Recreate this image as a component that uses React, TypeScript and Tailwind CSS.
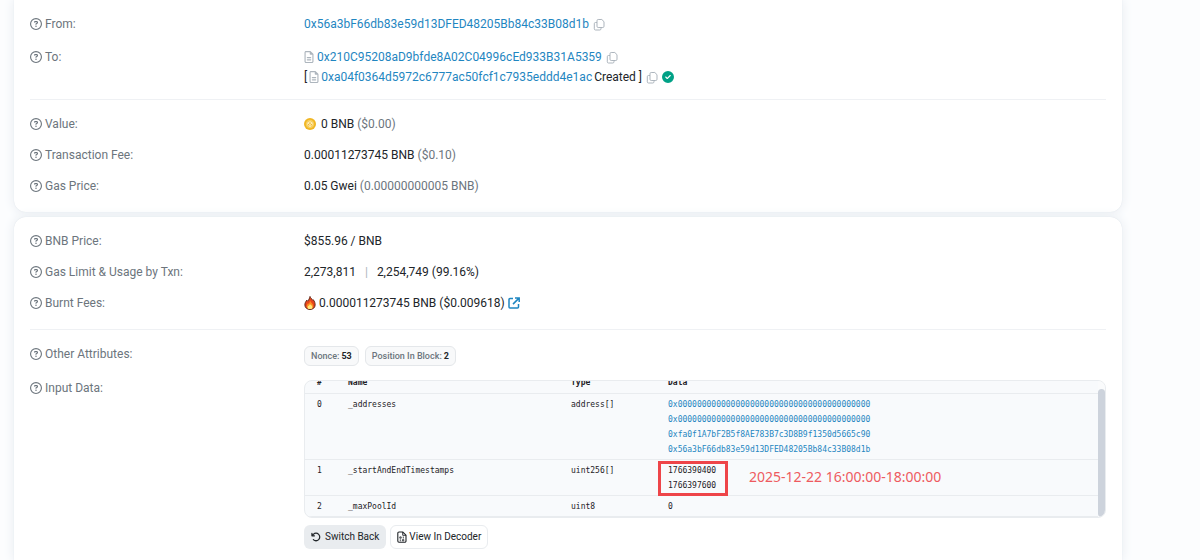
import type { ReactNode } from "react";
import {
  FaRegCircleQuestion,
  FaRegFileLines,
  FaCircleCheck,
  FaArrowRotateLeft,
} from "react-icons/fa6";

function Row({ label, children }: { label: string; children: ReactNode }) {
  return (
    <div className="grid grid-cols-[274px_minmax(0,1fr)]">
      <dt className="flex h-5 items-center gap-[3px] text-[#6c757d]">
        <FaRegCircleQuestion className="size-3" />
        {label}
      </dt>
      <dd>{children}</dd>
    </div>
  );
}

function Divider() {
  return <hr className="border-t border-[#eff1f4]" />;
}

function CopyButton({ label }: { label: string }) {
  return (
    <button type="button" aria-label={label} className="ml-1 text-[#adb5bd]">
      <svg viewBox="0 0 12 13" className="h-[13px] w-3" fill="none" stroke="currentColor" strokeWidth="1">
        <path d="M5.200 1.500h3.600L11 3.700v4.600a1.200 1.200 0 0 1-1.200 1.200H5.200A1.200 1.200 0 0 1 4 8.300V2.700a1.200 1.200 0 0 1 1.200-1.200Z" />
        <path d="M4 4.500H2.500A1.200 1.200 0 0 0 1.300 5.700v5.100A1.200 1.200 0 0 0 2.500 12h4.300A1.200 1.200 0 0 0 8 10.800V9.500" />
      </svg>
    </button>
  );
}

function BnbCoin() {
  return (
    <svg viewBox="0 0 24 24" className="size-3" aria-hidden="true">
      <circle cx="12" cy="12" r="12" fill="#f0b622" />
      <circle cx="12" cy="12" r="8.500" fill="#f6cd5c" />
      <path d="M12 6.500l5 2.800v4.500l-5 4.200-5-4.200V9.300z" fill="#fff3cf" />
      <path d="M12 8.500l2.800 1.700L12 12l-2.800-1.800zM11 13.200v3l-3-2.400v-2.300zM13 13.200v3l3-2.400v-2.300z" fill="#f0b622" />
    </svg>
  );
}

function Flame() {
  return (
    <svg viewBox="0 0 24 30" className="h-3.5 w-3" aria-hidden="true">
      <path
        d="M12 1c1 4 4 5 6 8l1-1c3 4 4 7 4 11 0 6-5 10-11 10S1 25 1 19c0-4 2-7 4-10l2 2c3-3 4-6 5-10Z"
        fill="#e8451c"
        stroke="#5b2413"
        strokeWidth="2"
      />
      <path d="M12 9c1 5 7 7 7 13 0 4-3 6-7 6s-7-2-7-6c0-3 2-5 3-7l1 2c2-2 3-5 3-8Z" fill="#ff8f1f" />
      <path d="M12 17c1 2 5 3 5 7 0 3-2 4-5 4s-5-1-5-4c0-3 4-4 5-7Z" fill="#ffe97a" />
    </svg>
  );
}

function ExternalIcon() {
  return (
    <svg viewBox="0 0 12 12" className="size-3" fill="none" stroke="currentColor" strokeWidth="1.500" aria-hidden="true">
      <path d="M5 1.500H2A1 1 0 0 0 1 2.500V10a1 1 0 0 0 1 1h7.500a1 1 0 0 0 1-1V7" />
      <path d="M7 .9h4.200V5M11 1.100 5 7.100" />
    </svg>
  );
}

function BinaryFileIcon() {
  return (
    <svg viewBox="0 0 10 12" className="h-3 w-2.5" fill="none" stroke="currentColor" aria-hidden="true">
      <path d="M2 1h3.800L9 4.200V10a1.300 1.300 0 0 1-1.300 1.300H2A1.300 1.300 0 0 1 .8 10V2.200A1.200 1.200 0 0 1 2 1Z" strokeWidth="1.100" />
      <path d="M5.700 1v3.300H9" strokeWidth=".9" />
      <path d="M2.800 5.900h1.400v1.300H2.800zM6.300 5.500v2M3.300 8.300v2M5.400 8.600h1.400v1.300H5.400z" strokeWidth=".8" />
    </svg>
  );
}

function Badge({ name, value }: { name: string; value: string }) {
  return (
    <span className="flex h-5 items-center gap-0.5 rounded-md border border-[#e4e7ea] bg-[#f8f9fa] px-1.5 text-[9px] font-medium text-[#6c757d]">
      {name}: <b className="font-bold text-[#212529]">{value}</b>
    </span>
  );
}

const link = "text-[#1f86c1]";

const params = [
  {
    name: "_addresses",
    type: "address[]",
    data: [
      "0x0000000000000000000000000000000000000000",
      "0x0000000000000000000000000000000000000000",
      "0xfa0f1A7bF2B5f8AE783B7c3D8B9f1350d5665c90",
      "0x56a3bF66db83e59d13DFED48205Bb84c33B08d1b",
    ],
  },
  { name: "_startAndEndTimestamps", type: "uint256[]", data: ["1766390400", "1766397600"], note: "2025-12-22 16:00:00-18:00:00" },
  { name: "_maxPoolId", type: "uint8", data: ["0"] },
];

function InputTable() {
  return (
    <div className="mt-0.5 flex h-[138px] overflow-hidden rounded-lg border border-[#e9ecef] bg-[#f8fafc]">
      <table className="-mt-[9px] h-0 min-w-0 flex-1 table-fixed border-separate border-spacing-0 text-left font-['DejaVu_Sans_Mono',monospace] text-[8px] leading-[15px] text-[#1d2126]">
        <thead>
          <tr className="[&>th]:border-b [&>th]:border-[#e9ecef] [&>th]:pt-[3px] [&>th]:pb-[3px] [&>th]:pl-2 [&>th]:font-bold">
            <th scope="col" className="w-[35px]"><span className="pl-1">#</span></th>
            <th scope="col" className="w-[223px]">Name</th>
            <th scope="col" className="w-[97px]">Type</th>
            <th scope="col">Data</th>
          </tr>
        </thead>
        <tbody>
          {params.map((p, i) => (
            <tr key={p.name} className="align-top [&>td]:border-b [&>td]:border-[#e9ecef] [&>td]:pt-[3px] [&>td]:pb-[2px] [&>td]:pl-2">
              <td><span className="pl-1">{i}</span></td>
              <td>{p.name}</td>
              <td>{p.type}</td>
              <td className="relative">
                {p.data.map((d, k) =>
                  d.startsWith("0x") ? (
                    <a key={k} href="#address" className={`block ${link}`}>{d}</a>
                  ) : (
                    <div key={k}>{d}</div>
                  ),
                )}
                {p.note && (
                  <>
                    <span className="absolute top-px -left-0.5 h-[35px] w-[70px] border-3 border-[#ee4549]" />
                    <span className="absolute top-[5px] left-[89px] font-['Noto_Sans',sans-serif] text-[14px] leading-6 whitespace-nowrap text-[#ee5a60]">
                      {p.note}
                    </span>
                  </>
                )}
              </td>
            </tr>
          ))}
        </tbody>
      </table>
      <div className="w-[7px] shrink-0 bg-[#fafbfc] pt-2">
        <div className="h-full rounded-full bg-[#cdd3dc]" />
      </div>
    </div>
  );
}

export default function App() {
  return (
    <main className="flex h-screen flex-col gap-[5px] overflow-hidden bg-[#fcfdfe] pr-[78px] pl-[14px] font-['Roboto',sans-serif] text-[12px] leading-5 text-[#212529]">
      <section className="shrink-0 rounded-b-xl bg-white px-4 pt-3.5 pb-4 shadow-[0_0_12px_#e6ebf0,0_0_1px_#ccd3db]">
        <dl className="flex flex-col gap-[13px]">
          <Row label="From:">
            <div className="flex h-5 items-center">
              <a href="#from" className={link}>0x56a3bF66db83e59d13DFED48205Bb84c33B08d1b</a>
              <CopyButton label="Copy sender" />
            </div>
          </Row>
          <Row label="To:">
            <div className="flex h-5 items-center">
              <FaRegFileLines className="mr-[3px] h-3 w-[10px] text-[#adb5bd]" />
              <a href="#to" className={link}>0x210C95208aD9bfde8A02C04996cEd933B31A5359</a>
              <CopyButton label="Copy recipient" />
            </div>
            <div className="flex h-5 items-center">
              [
              <FaRegFileLines className="mx-0.5 h-3 w-[10px] text-[#adb5bd]" />
              <a href="#created" className={`mr-0.5 ${link}`}>0xa04f0364d5972c6777ac50fcf1c7935eddd4e1ac</a>
              Created ]
              <CopyButton label="Copy contract" />
              <FaCircleCheck className="ml-1 size-3 text-[#00a186]" />
            </div>
          </Row>
        </dl>
        <div className="pt-3 pb-3.5"><Divider /></div>
        <dl className="flex flex-col gap-[11px]">
          <Row label="Value:">
            <div className="flex h-5 items-center">
              <BnbCoin />
              <span className="ml-[5px]">0 BNB <span className="text-[#6c757d]">($0.00)</span></span>
            </div>
          </Row>
          <Row label="Transaction Fee:">
            0.00011273745 BNB <span className="text-[#6c757d]">($0.10)</span>
          </Row>
          <Row label="Gas Price:">
            0.05 Gwei <span className="text-[#6c757d]">(0.00000000005 BNB)</span>
          </Row>
        </dl>
      </section>

      <section className="flex-1 shrink-0 rounded-t-xl bg-white px-4 pt-3.5 shadow-[0_0_12px_#e6ebf0,0_0_1px_#ccd3db]">
        <dl className="flex flex-col gap-[11px]">
          <Row label="BNB Price:">$855.96 / BNB</Row>
          <Row label="Gas Limit & Usage by Txn:">
            2,273,811<span className="mx-[9px] text-[#adb5bd]">|</span>2,254,749 (99.16%)
          </Row>
          <Row label="Burnt Fees:">
            <div className="flex h-5 items-center">
              <Flame />
              <span className="mx-[3px]">0.000011273745 BNB ($0.009618)</span>
              <a href="#burnt" aria-label="Burnt fees details" className={link}><ExternalIcon /></a>
            </div>
          </Row>
        </dl>
        <div className="pt-4 pb-3.5"><Divider /></div>
        <dl className="flex flex-col gap-3">
          <Row label="Other Attributes:">
            <div className="mt-0.5 flex gap-1.5">
              <Badge name="Nonce" value="53" />
              <Badge name="Position In Block" value="2" />
            </div>
          </Row>
          <Row label="Input Data:">
            <InputTable />
            <div className="mt-[7px] flex gap-1">
              <button type="button" className="flex h-6 items-center gap-1 rounded-md bg-[#e9ecef] px-[7px] text-[10px]">
                <FaArrowRotateLeft className="size-2.5" />
                Switch Back
              </button>
              <button type="button" className="flex h-6 items-center gap-0.5 rounded-md border border-[#e9ecef] bg-white px-1.5 text-[10px]">
                <BinaryFileIcon />
                View In Decoder
              </button>
            </div>
          </Row>
        </dl>
      </section>
    </main>
  );
}
